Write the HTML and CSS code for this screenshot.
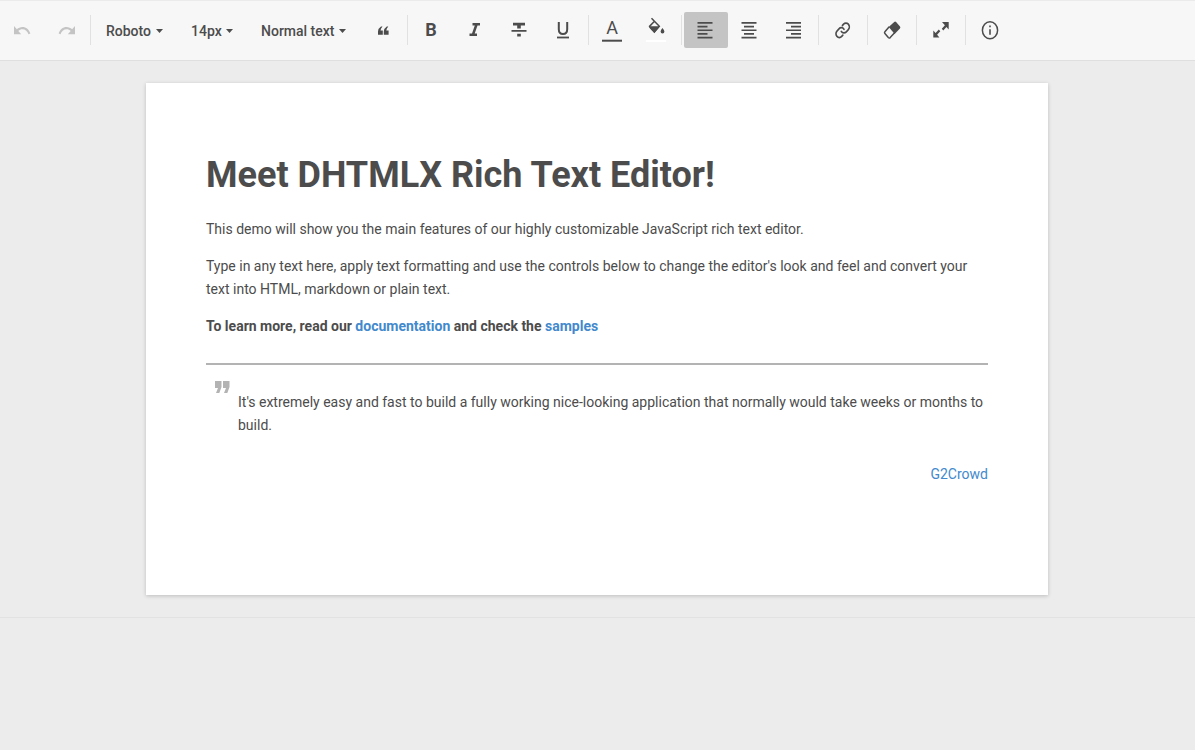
FILE: index.html
```html
<!DOCTYPE html>
<html lang="en">
<head>
<meta charset="utf-8">
<title>Rich Text Editor</title>
<link rel="stylesheet" href="styles.css">
</head>
<body>
<div class="toolbar" role="toolbar" aria-label="Formatting">
  <button class="tool" type="button" aria-label="Undo" disabled><svg class="icon" viewBox="0 0 44 36"><path transform="translate(12.4 7.8) scale(.8 .9)" d="M12.5 8c-2.65 0-5.05.99-6.9 2.6L2 7v9h9l-3.62-3.62c1.39-1.16 3.16-1.88 5.12-1.88 3.54 0 6.55 2.31 7.6 5.5l2.37-.78C21.08 11.03 17.15 8 12.5 8z"/></svg></button>
  <button class="tool" type="button" aria-label="Redo" disabled><svg class="icon" viewBox="0 0 44 36"><path transform="translate(32.6 7.8) scale(-.8 .9)" d="M12.5 8c-2.65 0-5.05.99-6.9 2.6L2 7v9h9l-3.62-3.62c1.39-1.16 3.16-1.88 5.12-1.88 3.54 0 6.55 2.31 7.6 5.5l2.37-.78C21.08 11.03 17.15 8 12.5 8z"/></svg></button>
  <span class="separator"></span>
  <label class="picker"><select class="picker-select" aria-label="Font family"><option>Roboto</option></select><svg class="caret" viewBox="0 0 7 4"><path d="M0 0h7L3.500 4z"/></svg></label>
  <label class="picker"><select class="picker-select" aria-label="Font size"><option>14px</option></select><svg class="caret" viewBox="0 0 7 4"><path d="M0 0h7L3.500 4z"/></svg></label>
  <label class="picker"><select class="picker-select" aria-label="Text style"><option>Normal text</option></select><svg class="caret" viewBox="0 0 7 4"><path d="M0 0h7L3.500 4z"/></svg></label>
  <button class="tool" type="button" aria-label="Quote"><svg class="icon" viewBox="0 0 44 36"><path d="M21.500 14.500h-1.500Q17 16.500 17 19.500v3.300h4.800v-4.400h-2.300q.2-1.900 2-3.900zM27.300 14.500h-1.500Q22.800 16.500 22.800 19.500v3.300h4.800v-4.400h-2.300q.2-1.900 2-3.900z"/></svg></button>
  <span class="separator"></span>
  <button class="tool" type="button" aria-label="Bold"><svg class="icon" viewBox="0 0 44 36"><text class="glyph-bold" x="21" y="24">B</text></svg></button>
  <button class="tool" type="button" aria-label="Italic"><svg class="icon" viewBox="0 0 44 36"><path d="M18.500 11h7.500v2.500h-2.500L20.700 21.500h2.300V24h-7.500v-2.500h2.500l2.800-8h-2.300z"/></svg></button>
  <button class="tool" type="button" aria-label="Strikethrough"><svg class="icon" viewBox="0 0 44 36"><path d="M15 10.800h12v2.700h-4.200v3h-3.600v-3H15zM13.500 18h15v1.800h-15zM19.200 21.800h3.600v2.700h-3.600z"/></svg></button>
  <button class="tool" type="button" aria-label="Underline"><svg class="icon" viewBox="0 0 44 36"><path class="stroke" d="M16.800 10v7.200c0 3.100 1.700 4.800 4.200 4.800s4.200-1.700 4.200-4.800V10"/><path d="M15 24.600h12v1.800H15z"/></svg></button>
  <span class="separator"></span>
  <button class="tool" type="button" aria-label="Text color"><svg class="icon" viewBox="0 0 44 36"><text class="glyph-letter" x="21" y="21.500">A</text><path d="M11 27.700h20v2H11z"/></svg></button>
  <button class="tool" type="button" aria-label="Background color"><svg class="icon" viewBox="-1 0 44 36"><path class="stroke-thin" d="M15.500 6.300L23.300 14.200L18.300 19.800Q13.500 15.200 13.500 14.400L18.700 9"/><path d="M13 14.300h11L18.300 21.200zM26.400 16q2 2.300 2 3.400a1.900 2 0 0 1-3.800 0q0-1.100 1.800-3.400z"/><path class="fill-white" d="M10 28h20v2H10z"/></svg></button>
  <span class="separator"></span>
  <button class="tool tool-active" type="button" aria-label="Align left" aria-pressed="true"><svg class="icon" viewBox="0 0 44 36"><path d="M13.500 10h15v1.700h-15zM13.500 13.700h10v1.700h-10zM13.500 17.400h15v1.700h-15zM13.500 21.100h10v1.700h-10zM13.500 24.800h15v1.700h-15z"/></svg></button>
  <button class="tool" type="button" aria-label="Align center"><svg class="icon" viewBox="0 0 44 36"><path d="M13.500 10h15v1.700h-15zM16 13.700h10v1.700h-10zM13.500 17.400h15v1.700h-15zM16 21.100h10v1.700h-10zM13.500 24.800h15v1.700h-15z"/></svg></button>
  <button class="tool" type="button" aria-label="Align right"><svg class="icon" viewBox="0 0 44 36"><path d="M14 10h15v1.700h-15zM19 13.700h10v1.700h-10zM14 17.400h15v1.700h-15zM19 21.100h10v1.700h-10zM14 24.800h15v1.700h-15z"/></svg></button>
  <span class="separator"></span>
  <button class="tool" type="button" aria-label="Link"><svg class="icon" viewBox="0 0 44 36"><g transform="translate(13.600 9.300) scale(.67 .75)"><path class="stroke-link" d="M10 13.500a5 5 0 0 0 7.500.5l3-3a5 5 0 0 0-7.100-7.100l-1.700 1.700M14 10.500a5 5 0 0 0-7.500-.5l-3 3a5 5 0 0 0 7.100 7.100l1.700-1.700"/></g></svg></button>
  <span class="separator"></span>
  <button class="tool" type="button" aria-label="Clear formatting"><svg class="icon" viewBox="0 0 44 36"><path class="stroke-thin" d="M19.200 14.700L14.900 19.700Q14.100 20.700 14.900 21.600L18.300 25.600Q19.200 26.600 20.200 25.600L24.600 20.800"/><path d="M18.700 15L24.200 9.900q1-.8 1.900.1l3.900 4.500q.8 1-.1 2L24.700 22z"/></svg></button>
  <span class="separator"></span>
  <button class="tool" type="button" aria-label="Full screen"><svg class="icon" viewBox="0 0 44 36"><path d="M23 10h6.700v7.500l-2.300-2.600-3.100 3.500-1.500-1.700 3.100-3.500zM14.300 18.500l2.300 2.600 3.200-3.600 1.500 1.700-3.200 3.600 2.300 2.700h-6.100z"/></svg></button>
  <span class="separator"></span>
  <button class="tool" type="button" aria-label="Information"><svg class="icon" viewBox="0 0 44 36"><ellipse class="stroke-thin" cx="22" cy="18.200" rx="7.600" ry="8.500"/><path d="M21.200 13.500h1.600v1.800h-1.600zM21.200 17.200h1.600v5.600h-1.600z"/></svg></button>
</div>
<main class="workspace">
  <article class="sheet" contenteditable="true" spellcheck="false" role="textbox" aria-multiline="true" aria-label="Document">
    <h1 class="title">Meet DHTMLX Rich Text Editor!</h1>
    <p class="paragraph">This demo will show you the main features of our highly customizable JavaScript rich text editor.</p>
    <p class="paragraph">Type in any text here, apply text formatting and use the controls below to change the editor's look and feel and convert your text into HTML, markdown or plain text.</p>
    <p class="paragraph"><strong>To learn more, read our <a class="link" href="#documentation">documentation</a> and check the <a class="link" href="#samples">samples</a></strong></p>
    <hr class="rule">
    <blockquote class="quote">
      <svg class="quote-mark" viewBox="0 0 15 12"><path d="M0 0h6.500v6L4.300 12H1l2-5H0zM8 0h6.500v6l-2.200 6H9l2-5H8z"/></svg>
      It's extremely easy and fast to build a fully working nice-looking application that normally would take weeks or months to build.
    </blockquote>
    <p class="source"><a class="link" href="#g2crowd">G2Crowd</a></p>
  </article>
</main>
</body>
</html>
```
FILE: styles.css
```css
* {
  box-sizing: border-box;
}

body {
  margin: 0;
  min-height: 100vh;
  background: #ececec;
  color: #4c4c4c;
  font-family: Roboto, "Liberation Sans", sans-serif;
  font-size: 14px;
  line-height: 23px;
}

.toolbar {
  display: flex;
  align-items: center;
  padding: 11px 0 12px;
  border-top: 1px solid #ebebeb;
  border-bottom: 1px solid #dfdfdf;
  background: #f7f7f7;
}

.tool {
  flex: none;
  width: 44px;
  padding: 0;
  border: 0;
  border-radius: 2px;
  background: none;
  color: #4c4c4c;
}

.tool:disabled {
  color: #c4c4c4;
}

.tool-active {
  background: #c4c4c4;
}

.icon {
  display: block;
  width: 44px;
  height: 36px;
  fill: currentColor;
}

.stroke,
.stroke-thin,
.stroke-link {
  fill: none;
  stroke: currentColor;
  stroke-width: 2;
}

.stroke-thin {
  stroke-width: 1.5;
}

.stroke-link {
  stroke-width: 2.4;
  stroke-linecap: round;
}

.fill-white {
  fill: #fff;
}

.glyph-bold,
.glyph-letter {
  font-family: Roboto, sans-serif;
  font-size: 18px;
  font-weight: 700;
  text-anchor: middle;
}

.glyph-letter {
  font-weight: 400;
}

.separator {
  flex: none;
  width: 1px;
  height: 30px;
  margin: 0 2px;
  background: #e1e1e1;
}

.picker {
  display: flex;
  align-items: center;
  gap: 4px;
  height: 36px;
  padding: 2px 15px 0 13px;
}

.picker-select {
  appearance: none;
  margin: 0;
  padding: 0;
  border: 0;
  background: none;
  color: inherit;
  font: 500 14px/20px Roboto, sans-serif;
}

.caret {
  width: 7px;
  height: 4px;
  fill: currentColor;
}

.workspace {
  padding: 22px 147px 22px 146px;
  border-bottom: 1px solid #e2e2e2;
}

.sheet {
  min-height: 512px;
  padding: 60px;
  background: #fff;
  box-shadow: 0 1px 4px rgba(0, 0, 0, 0.2);
  outline: none;
}

.title {
  margin: 0 0 11px;
  font-size: 36px;
  font-weight: 700;
  line-height: 64px;
}

.paragraph {
  margin: 0 0 14px;
}

.link {
  color: #4289cd;
  text-decoration: none;
}

.rule {
  height: 2px;
  margin: 25px 0 14px;
  border: 0;
  background: #b3b3b3;
}

.quote {
  position: relative;
  margin: 0 0 26px;
  padding: 12px 0 0 32px;
}

.quote-mark {
  position: absolute;
  top: 2px;
  left: 9px;
  width: 15px;
  height: 12px;
  fill: #b3b3b3;
}

.source {
  margin: 0;
  text-align: right;
}
```
